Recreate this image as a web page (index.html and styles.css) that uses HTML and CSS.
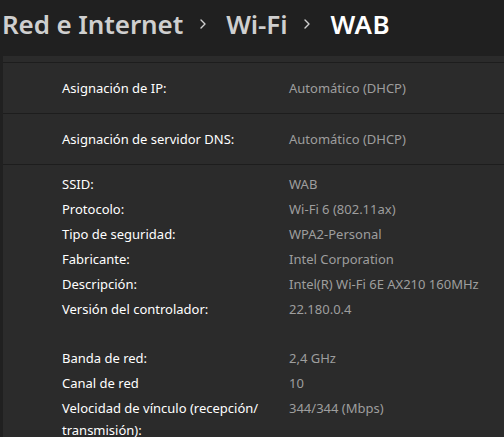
FILE: index.html
```html
<!DOCTYPE html>
<html lang="es">
<head>
<meta charset="utf-8">
<title>WAB</title>
<link rel="stylesheet" href="styles.css">
</head>
<body>
<header class="crumbs">
  <span class="crumb">Red e Internet</span>
  <svg class="chev" width="8" height="12" viewBox="0 0 8 12"><path d="M2 2 L6 6 L2 10" fill="none" stroke="#cfcfcf" stroke-width="1.4" stroke-linecap="round" stroke-linejoin="round"/></svg>
  <span class="crumb">Wi-Fi</span>
  <svg class="chev" width="8" height="12" viewBox="0 0 8 12"><path d="M2 2 L6 6 L2 10" fill="none" stroke="#cfcfcf" stroke-width="1.4" stroke-linecap="round" stroke-linejoin="round"/></svg>
  <span class="crumb current">WAB</span>
</header>
<main class="group">
  <div class="card stub"></div>
  <div class="card single">
    <div class="label">Asignación de IP:</div>
    <div class="value">Automático (DHCP)</div>
  </div>
  <div class="card single">
    <div class="label">Asignación de servidor DNS:</div>
    <div class="value">Automático (DHCP)</div>
  </div>
  <div class="card props">
    <div class="block">
      <div class="label">SSID:</div><div class="value">WAB</div>
      <div class="label">Protocolo:</div><div class="value">Wi-Fi 6 (802.11ax)</div>
      <div class="label">Tipo de seguridad:</div><div class="value">WPA2-Personal</div>
      <div class="label">Fabricante:</div><div class="value">Intel Corporation</div>
      <div class="label">Descripción:</div><div class="value">Intel(R) Wi-Fi 6E AX210 160MHz</div>
      <div class="label">Versión del controlador:</div><div class="value">22.180.0.4</div>
    </div>
    <div class="block">
      <div class="label">Banda de red:</div><div class="value">2,4 GHz</div>
      <div class="label">Canal de red</div><div class="value">10</div>
      <div class="label">Velocidad de vínculo (recepción/<br>transmisión):</div><div class="value">344/344 (Mbps)</div>
    </div>
  </div>
</main>
</body>
</html>
```

FILE: styles.css
```css
html, body {
  margin: 0;
  padding: 0;
  background: #202020;
  overflow: hidden;
  height: 437px;
}
body {
  font-family: "Segoe UI", "Noto Sans", "Open Sans", sans-serif;
  color: #ffffff;
}
.crumbs {
  height: 56px;
  display: flex;
  align-items: center;
  padding-left: 2px;
  padding-bottom: 8px;
  box-sizing: border-box;
}
.crumb {
  font-size: 26px;
  font-weight: 600;
  color: #cfcfcf;
  letter-spacing: -0.1px;
  line-height: 32px;
}
.crumb.current {
  color: #ffffff;
  letter-spacing: 0.4px;
}
.chev {
  margin: 0 19px 0 16px;
}
.group {
  margin-left: 3px;
  display: flex;
  flex-direction: column;
  gap: 1px;
  background: #1d1d1d;
}
.card {
  background: #2b2b2b;
}
.stub {
  height: 6px;
}
.single {
  height: 50px;
  display: grid;
  grid-template-columns: 227px 1fr;
  align-items: center;
  padding-left: 59px;
}
.label, .value {
  font-size: 13px;
  line-height: 22px;
}
.label {
  color: #ffffff;
}
.value {
  color: #9e9e9e;
}
.props {
  padding: 8px 0 0 59px;
  height: 300px;
  display: flex;
  flex-direction: column;
  gap: 27px;
}
.block {
  display: grid;
  grid-template-columns: 227px 1fr;
  row-gap: 3px;
  align-items: start;
}
```
